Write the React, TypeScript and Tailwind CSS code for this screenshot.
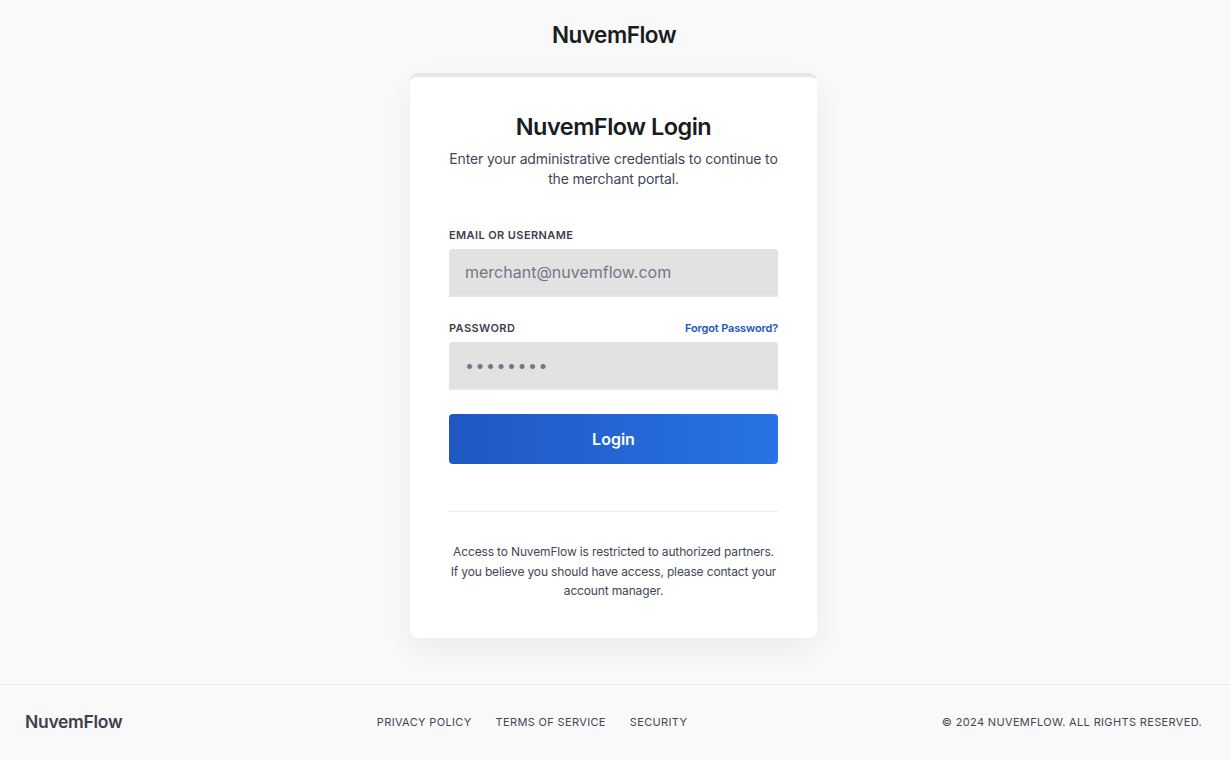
import React from "react";

export default function App() {
  return (
    <div
      className="min-h-[760px] flex flex-col bg-[#f9f9f9] text-[#1a1c1e]"
      style={{ fontFamily: "Inter, 'Noto Sans', sans-serif" }}
    >
      <header className="h-[70px] flex items-center justify-center">
        <div className="text-[22.5px] font-semibold tracking-[-0.5px] text-[#1a1c1e] mr-[2px]">NuvemFlow</div>
      </header>
      <main className="flex-1 flex justify-center items-start pt-[3px]">
        <div className="w-[407px] mr-[3px] bg-white rounded-lg border-t-4 border-[#e6e6e6] shadow-[0_12px_32px_rgba(20,30,60,0.06)] px-[39px] pt-[34px] pb-[37px]">
          <h1 className="text-center text-[23.5px] font-semibold tracking-[-0.5px] leading-[32px]">NuvemFlow Login</h1>
          <p className="mt-[6px] text-center text-[14px] leading-[20px] tracking-[-0.15px] text-[#414755]">
            Enter your administrative credentials to continue to the merchant portal.
          </p>
          <div className="mt-[39px]">
            <label className="block text-[11px] font-semibold tracking-[0.4px] text-[#3c414c] leading-[14px]">EMAIL OR USERNAME</label>
            <div className="mt-[7px] h-[48px] bg-[#e2e2e2] rounded-t-[4px] flex items-center px-4 text-[16px] text-[#727785] border-b-2 border-[#e6e6e6]">
              merchant@nuvemflow.com
            </div>
          </div>
          <div className="mt-[24px]">
            <div className="flex justify-between items-center">
              <label className="block text-[11px] font-semibold tracking-[0.4px] text-[#3c414c] leading-[14px]">PASSWORD</label>
              <span className="text-[11px] font-semibold tracking-[-0.15px] text-[#1d55c4] leading-[14px]">Forgot Password?</span>
            </div>
            <div className="mt-[7px] h-[48px] bg-[#e2e2e2] rounded-t-[4px] flex items-center px-4 text-[16px] text-[#727785] tracking-[1.5px] border-b-2 border-[#e6e6e6]">
              ••••••••
            </div>
          </div>
          <button className="mt-[24px] w-full h-[50px] rounded-[4px] bg-gradient-to-r from-[#1f58c1] to-[#2873e6] text-white font-semibold text-[16px]">
            Login
          </button>
          <div className="mt-[47px] border-t border-[#ececec]" />
          <p className="mt-[30px] text-center text-[12px] leading-[19.5px] tracking-[-0.15px] text-[#414755]">
            Access to NuvemFlow is restricted to authorized partners. If you believe you should have access, please contact your account manager.
          </p>
        </div>
      </main>
      <footer className="mt-[46px] h-[76px] border-t border-[#ebebeb] flex items-center justify-between pl-[25px] pr-[28px]">
        <div className="text-[17.5px] font-semibold tracking-[-0.3px] text-[#3c414c]">NuvemFlow</div>
        <nav className="flex gap-6 text-[11px] tracking-[0.35px] text-[#414755]">
          <span>PRIVACY POLICY</span>
          <span>TERMS OF SERVICE</span>
          <span>SECURITY</span>
        </nav>
        <div className="text-right text-[11px] tracking-[0.35px] text-[#414755]">© 2024 NUVEMFLOW. ALL RIGHTS RESERVED.</div>
      </footer>
    </div>
  );
}
